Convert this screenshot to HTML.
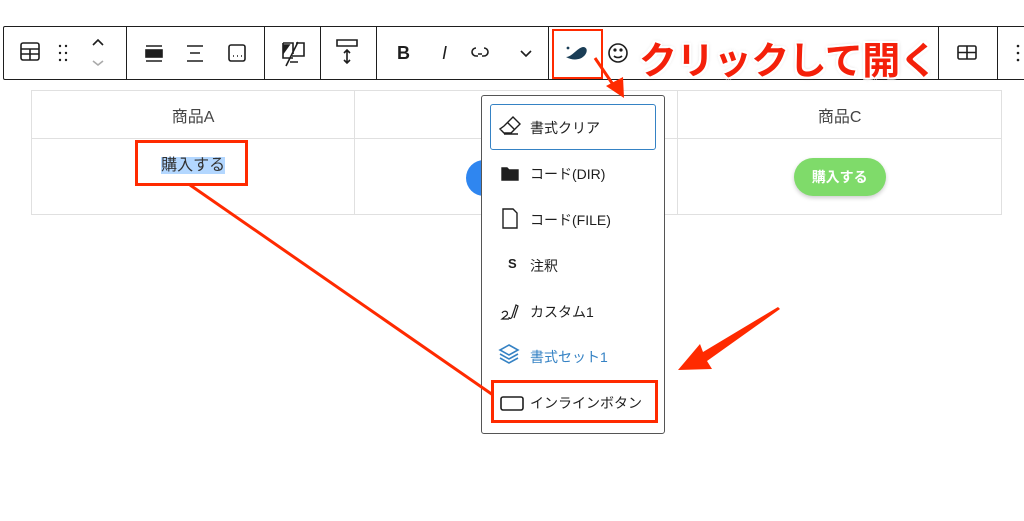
<!DOCTYPE html>
<html><head><meta charset="utf-8"><style>
body{margin:0;width:1024px;height:521px;background:#fff;position:relative;overflow:hidden;font-family:"Liberation Sans","Noto Sans CJK JP",sans-serif;color:#1e1e1e}
.tb{position:absolute;left:3px;top:26px;width:1030px;height:54px;border:1px solid #1e1e1e;border-radius:2px;box-sizing:border-box;background:#fff}
.dv{position:absolute;top:26px;width:1px;height:54px;background:#1e1e1e}
.ic{position:absolute}
table{position:absolute;left:31px;top:90px;border-collapse:collapse;width:971px}
td{border:1px solid #e0e0e0;text-align:center;font-size:16px;color:#444;width:323px}
.r1{height:48px}.r2{height:76px}
.menu{position:absolute;left:481px;top:95px;width:184px;height:339px;border:1px solid #555;border-radius:3px;background:#fff;box-sizing:border-box}
.it{position:absolute;left:30px;font-size:14px;color:#1e1e1e}
.red{position:absolute;border:3px solid #ff2a00;box-sizing:border-box}
.ann{position:absolute;left:639px;top:30px;font-size:38px;font-weight:bold;color:#f4200a;letter-spacing:-0.6px;text-shadow:2px 0 #fff,-2px 0 #fff,0 2px #fff,0 -2px #fff,2px 2px #fff,-2px -2px #fff,2px -2px #fff,-2px 2px #fff,0 0 4px #999}
</style></head><body>
<div class="tb"></div>
<div class="dv" style="left:126px"></div><div class="dv" style="left:264px"></div><div class="dv" style="left:320px"></div><div class="dv" style="left:376px"></div><div class="dv" style="left:548px"></div><div class="dv" style="left:938px"></div><div class="dv" style="left:997px"></div>
<svg class="ic" style="left:0;top:26px" width="1024" height="54" fill="none" stroke="#1e1e1e" stroke-width="1.6">
<rect x="21" y="17" width="18" height="17" rx="2"/><path d="M21 23h18M30 23v11M21 28h18"/>
<g fill="#1e1e1e" stroke="none"><circle cx="60" cy="20" r="1.2"/><circle cx="66" cy="20" r="1.2"/><circle cx="60" cy="27" r="1.2"/><circle cx="66" cy="27" r="1.2"/><circle cx="60" cy="34" r="1.2"/><circle cx="66" cy="34" r="1.2"/></g>
<path d="M93 19l5-5 5 5"/><path d="M93 35l5 4 5-4" stroke="#aaa"/>
<path d="M146 20h16M146 35h16"/><rect x="146" y="24" width="16" height="7" fill="#1e1e1e"/>
<path d="M187 20h16M187 35h16M190 27h10"/>
<rect x="229" y="19" width="16" height="16" rx="2"/><path d="M233 30h1M237 30h1M241 30h1"/>
<path d="M283 17h10v11M283 17v15h10M290 36h8M296 17h8v13h-12M286 40l12-24"/><path d="M284 19l5 0-5 7z" fill="#1e1e1e"/>
<path d="M337 14h20v6h-20zM347 24v13M344 27l3-3 3 3M344 34l3 3 3-3"/>
<path d="M478 28h4M484 22a4 4 0 0 1 0 8h-2M476 22a4 4 0 0 0 0 8h2"/>
<path d="M521 25l5 5 5-5"/>
<path d="M566 31c6 0 11-9 17-10 4 0 5 4 2 8-4 5-12 6-19 2z" fill="#1a3d56" stroke="none"/><circle cx="568" cy="22" r="1.4" fill="#1a3d56" stroke="none"/>
<circle cx="618" cy="27" r="9"/><circle cx="615" cy="24" r=".8" fill="#1e1e1e"/><circle cx="621" cy="24" r=".8" fill="#1e1e1e"/><path d="M614 30c2 2 6 2 8 0"/>
<rect x="958" y="20" width="18" height="13" rx="1.5"/><path d="M958 26.5h18M967 20v13"/>
<g fill="#1e1e1e" stroke="none"><circle cx="1018" cy="20" r="1.3"/><circle cx="1018" cy="27" r="1.3"/><circle cx="1018" cy="34" r="1.3"/></g>
</svg>
<div style="position:absolute;left:397px;top:43px;font-size:18px;font-weight:bold">B</div>
<div style="position:absolute;left:442px;top:43px;font-size:18px;font-style:italic">I</div>
<div class="ann">クリックして開く</div>
<div class="red" style="left:552px;top:29px;width:51px;height:50px;border-width:2px"></div>
<table><tr class="r1"><td>商品A</td><td></td><td>商品C</td></tr>
<tr class="r2"><td style="vertical-align:top;padding-top:12px"><span style="background:#b3d7ff;color:#333">購入する</span></td><td></td><td><span style="display:inline-block;background:#7fdb6a;color:#fff;font-weight:bold;font-size:14px;padding:9px 18px;border-radius:20px;box-shadow:0 2px 4px rgba(0,0,0,.2)">購入する</span></td></tr></table>
<div style="position:absolute;left:466px;top:160px;width:40px;height:36px;border-radius:18px;background:#2f86f0"></div>
<div class="red" style="left:135px;top:140px;width:113px;height:46px"></div>
<div class="menu">
<div style="position:absolute;left:8px;top:8px;width:166px;height:46px;border:1.5px solid #3582c4;border-radius:3px;box-sizing:border-box"></div>
<svg class="ic" style="left:0;top:0" width="184" height="339" fill="none" stroke="#1e1e1e" stroke-width="1.4">
<path d="M22 30l9-9 7 7-9 9h-7l-4-4zM26 27l6 6M22 38h14"/>
<path d="M20 72h5l2 2h9v10h-16z" fill="#1e1e1e"/>
<path d="M21 113h10l4 4v15h-14z"/>
<path d="M20 217c2-3 7-2 5 2l-5 4h7M27 221c0 2 2 2 3 0l4-12 2 1-4 12" stroke-width="1.2"/>
<g stroke="#3582c4" stroke-width="1.6"><path d="M27 249l9 5-9 5-9-5z"/><path d="M18 258l9 5 9-5M18 262l9 5 9-5"/></g>
<rect x="19" y="301" width="22" height="13" rx="2" stroke-width="1.6"/>
</svg>
<div class="it" style="left:48px;top:22px">書式クリア</div>
<div class="it" style="left:48px;top:68px">コード(DIR)</div>
<div class="it" style="left:48px;top:114px">コード(FILE)</div>
<div class="it" style="left:26px;top:160px;font-size:13px;font-weight:bold">S</div>
<div class="it" style="left:48px;top:160px">注釈</div>
<div class="it" style="left:48px;top:206px">カスタム1</div>
<div class="it" style="left:48px;top:251px;color:#3582c4">書式セット1</div>
<div class="it" style="left:48px;top:297px">インラインボタン</div>
</div>
<div class="red" style="left:491px;top:380px;width:167px;height:43px"></div>
<svg class="ic" style="left:0;top:0" width="1024" height="521">
<line x1="190" y1="185" x2="493" y2="395" stroke="#ff2a00" stroke-width="3"/>
<line x1="595" y1="58" x2="614" y2="86" stroke="#ff2a00" stroke-width="3"/>
<path d="M606 86l18 12-1-21z" fill="#ff2a00"/>
<path d="M778 307L703 352l-3-8-22 26 34-1-5-8 73-52z" fill="#ff2a00"/>
</svg>
</body></html>
